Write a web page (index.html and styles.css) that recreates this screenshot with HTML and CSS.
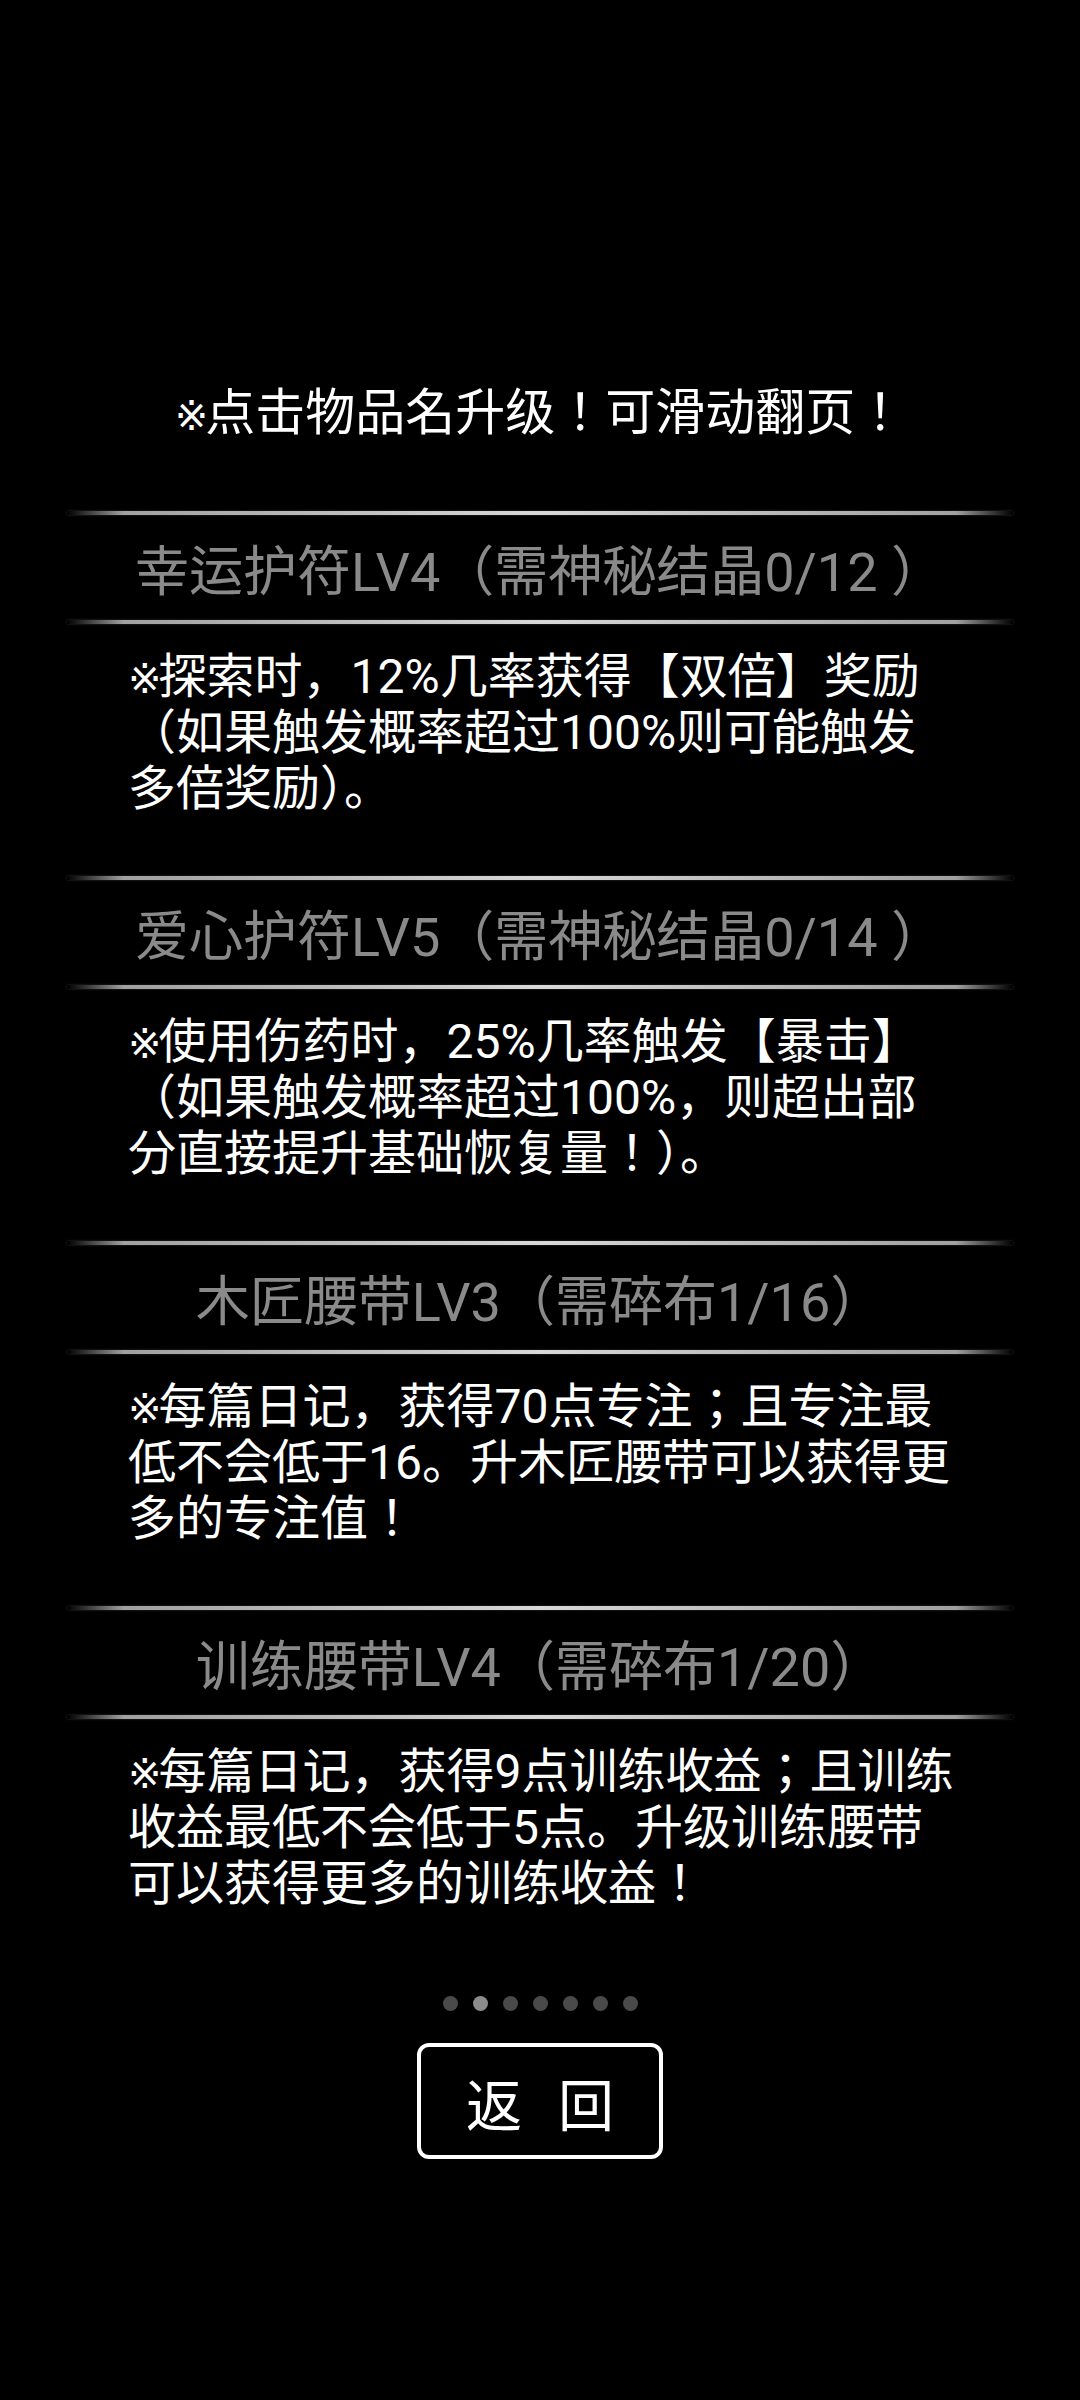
FILE: index.html
```html
<!doctype html>
<html>
	<head>
		<meta charset="utf-8">
		<title>物品升级</title>
		<meta name="viewport" content="width=device-width,initial-scale=1">
		<link rel="stylesheet" href="styles.css">
	</head>
	<body>
		<div class="tip"><span class="mark">※</span>点击物品名升级！可滑动翻页！</div>
		<div class="list">
			<div class="rule"></div>
			<div class="name">幸运护符LV4（需神秘结晶0/12 ）</div>
			<div class="rule"></div>
			<div class="desc"><span class="mark">※</span>探索时，12%几率获得【双倍】奖励（如果触发概率超过100%则可能触发多倍奖励）。</div>

			<div class="rule"></div>
			<div class="name">爱心护符LV5（需神秘结晶0/14 ）</div>
			<div class="rule"></div>
			<div class="desc"><span class="mark">※</span>使用伤药时，25%几率触发【暴击】（如果触发概率超过100%，则超出部分直接提升基础恢复量！）。</div>

			<div class="rule"></div>
			<div class="name">木匠腰带LV3（需碎布1/16）</div>
			<div class="rule"></div>
			<div class="desc"><span class="mark">※</span>每篇日记，获得70点专注；且专注最低不会低于16。升木匠腰带可以获得更多的专注值！</div>

			<div class="rule"></div>
			<div class="name">训练腰带LV4（需碎布1/20）</div>
			<div class="rule"></div>
			<div class="desc"><span class="mark">※</span>每篇日记，获得9点训练收益；且训练收益最低不会低于5点。升级训练腰带可以获得更多的训练收益！</div>
		</div>
		<div class="dots">
			<i></i><i class="on"></i><i></i><i></i><i></i><i></i><i></i>
		</div>
		<div class="foot">
			<button class="back"><span>返</span><span>回</span></button>
		</div>
	</body>
</html>
```

FILE: styles.css
```css
* {
	margin: 0;
	padding: 0;
	box-sizing: border-box;
}
body {
	background-color: #000;
	color: #fff;
	font-family: Roboto, "Noto Sans CJK JP", sans-serif;
}
.tip {
	height: 511px;
	padding-top: 385px;
	font-size: 50px;
	line-height: 56px;
	text-align: center;
}
/* reference mark drawn narrower than a CJK cell */
.mark {
	font-family: "DejaVu Sans", sans-serif;
	font-size: 40px;
	line-height: 0;
	letter-spacing: -3px;
}
.list {
	margin: 0 67px;
}
.rule {
	height: 4px;
	background: linear-gradient(90deg, rgba(200,200,200,0) 0, #a0a0a0 6%, #d8d8d8 50%, #a0a0a0 94%, rgba(200,200,200,0) 100%);
	box-shadow: 0 0 2px rgba(255,255,255,.25);
}
.name {
	height: 105px;
	display: flex;
	align-items: center;
	justify-content: center;
	font-size: 54px;
	color: #8a8a8a;
	white-space: nowrap;
}
.desc {
	height: 252px;
	padding: 25px 57px 0 61px;
	font-size: 48px;
	line-height: 56px;
}
.dots {
	display: flex;
	justify-content: center;
	gap: 15px;
	margin-top: 25px;
}
.dots i {
	width: 15px;
	height: 15px;
	border-radius: 50%;
	background-color: #4a4a4a;
}
.dots i.on {
	background-color: #8c8c8c;
}
.foot {
	display: flex;
	justify-content: center;
	margin-top: 32px;
}
.back {
	width: 246px;
	height: 116px;
	border: 4px solid #fff;
	border-radius: 12px;
	background-color: #000;
	color: #fff;
	font-family: Roboto, "Noto Sans CJK JP", sans-serif;
	font-size: 56px;
	display: flex;
	align-items: center;
	justify-content: center;
	gap: 36px;
}
```
